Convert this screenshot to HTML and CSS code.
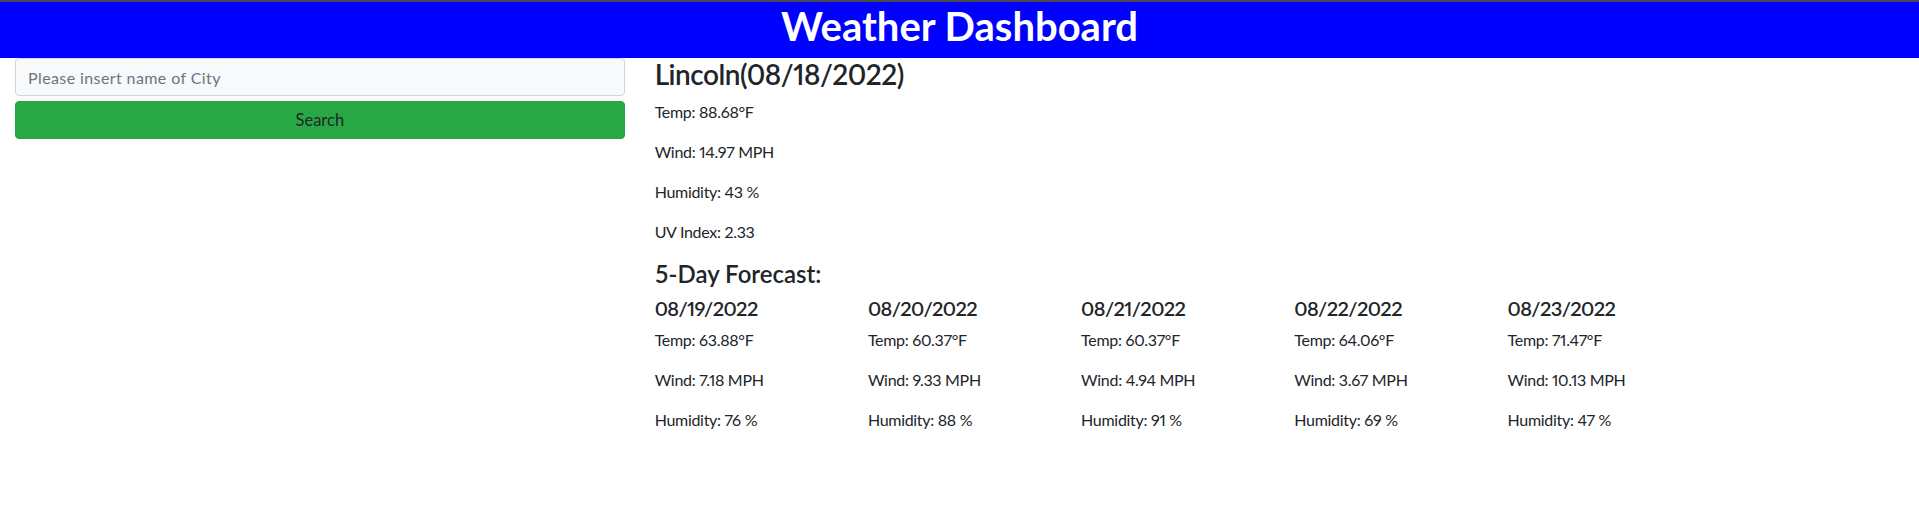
FILE: index.html
```html
<!DOCTYPE html>
<html lang="en">
<head>
<meta charset="utf-8">
<title>Weather Dashboard</title>
<link rel="stylesheet" href="styles.css">
</head>
<body>
<header class="page-header">
  <h1 class="page-title">Weather Dashboard</h1>
</header>
<div class="layout">
  <aside class="sidebar">
    <input class="city-input" type="text" placeholder="Please insert name of City">
    <button class="search-btn" type="button">Search</button>
  </aside>
  <main class="content">
    <h3 class="current-title">Lincoln(08/18/2022)</h3>
    <p class="stat">Temp: 88.68°F</p>
    <p class="stat">Wind: 14.97 MPH</p>
    <p class="stat">Humidity: 43 %</p>
    <p class="stat">UV Index: 2.33</p>
    <h4 class="forecast-title">5-Day Forecast:</h4>
    <div class="forecast">
      <div class="day">
        <h5 class="day-date">08/19/2022</h5>
        <p class="stat">Temp: 63.88°F</p>
        <p class="stat">Wind: 7.18 MPH</p>
        <p class="stat">Humidity: 76 %</p>
      </div>
      <div class="day">
        <h5 class="day-date">08/20/2022</h5>
        <p class="stat">Temp: 60.37°F</p>
        <p class="stat">Wind: 9.33 MPH</p>
        <p class="stat">Humidity: 88 %</p>
      </div>
      <div class="day">
        <h5 class="day-date">08/21/2022</h5>
        <p class="stat">Temp: 60.37°F</p>
        <p class="stat">Wind: 4.94 MPH</p>
        <p class="stat">Humidity: 91 %</p>
      </div>
      <div class="day">
        <h5 class="day-date">08/22/2022</h5>
        <p class="stat">Temp: 64.06°F</p>
        <p class="stat">Wind: 3.67 MPH</p>
        <p class="stat">Humidity: 69 %</p>
      </div>
      <div class="day">
        <h5 class="day-date">08/23/2022</h5>
        <p class="stat">Temp: 71.47°F</p>
        <p class="stat">Wind: 10.13 MPH</p>
        <p class="stat">Humidity: 47 %</p>
      </div>
    </div>
  </main>
</div>
</body>
</html>
```
FILE: styles.css
```css
* { box-sizing: border-box; }

body {
  margin: 0;
  font-family: Lato, "Liberation Sans", sans-serif;
  font-size: 16px;
  line-height: 1.5;
  color: #212529;
  background: #fff;
}

.page-header {
  display: flow-root;
  background: #0000ff;
  border-top: 2px solid #4a4a4a;
}

.page-title {
  margin: 0 0 8px;
  text-align: center;
  color: #fff;
  font-size: 40px;
  line-height: 1.2;
  font-weight: 700;
}

.layout {
  display: grid;
  grid-template-columns: 1fr 2fr;
}

.sidebar {
  padding: 0 15px;
  display: flex;
  flex-direction: column;
  gap: 5px;
}

.city-input {
  width: 100%;
  height: 38px;
  padding: 6px 12px;
  font: inherit;
  letter-spacing: 0.4px;
  color: #495057;
  background: #f8f9fa;
  border: 1px solid #ced4da;
  border-radius: 4px;
}

.city-input::placeholder { color: #6c757d; }

.search-btn {
  width: 100%;
  height: 38px;
  padding: 6px 12px;
  font: inherit;
  font-size: 16.5px;
  color: #212529;
  background: #28a745;
  border: 1px solid #28a745;
  border-radius: 4px;
}

.content { padding: 0 15px; }

.current-title {
  margin: 0 0 8px;
  font-size: 28px;
  line-height: 1.2;
  font-weight: 600;
  letter-spacing: -0.5px;
  font-variant-numeric: proportional-nums;
}

.stat {
  margin: 0 0 16px;
  letter-spacing: -0.3px;
  font-variant-numeric: proportional-nums;
}

.forecast-title {
  margin: 0 0 8px;
  font-size: 24px;
  line-height: 1.2;
  font-weight: 600;
}

.forecast {
  display: grid;
  grid-template-columns: repeat(6, 1fr);
  margin: 0 -15px;
}

.day { padding: 0 15px; }

.day-date {
  margin: 0 0 8px;
  font-size: 20px;
  line-height: 1.2;
  font-weight: 600;
  letter-spacing: -0.6px;
  font-variant-numeric: proportional-nums;
}
```
